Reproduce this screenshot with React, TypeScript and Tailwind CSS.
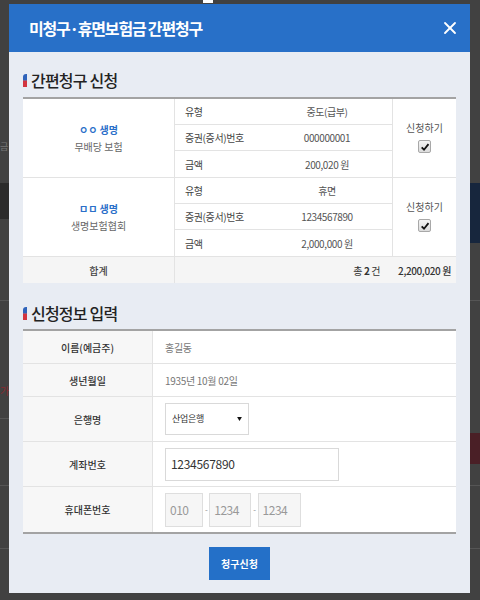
import React from "react";
import { X } from "lucide-react";

const font = { fontFamily: '"Noto Sans CJK KR", "Noto Sans", sans-serif' };

interface Policy {
  company: string;
  product: string;
  type: string;
  number: string;
  amount: string;
}

const policies: Policy[] = [
  { company: "ㅇㅇ 생명", product: "무배당 보험", type: "중도(급부)", number: "000000001", amount: "200,020 원" },
  { company: "ㅁㅁ 생명", product: "생명보험협회", type: "휴면", number: "1234567890", amount: "2,000,000 원" },
];

const SectionTitle = ({ children }: { children: React.ReactNode }) => (
  <div className="flex items-center h-[24px] gap-[4px]">
    <span className="w-[4px] h-[13px] rounded-tl-[3px] bg-linear-to-b from-[#2f63ba] from-45% to-[#d3343f] to-55%" />
    <h2 className="text-[16px] leading-none font-medium text-[#222] tracking-[-0.8px]">{children}</h2>
  </div>
);

const CheckBox = () => (
  <span className="w-[13px] h-[13px] border border-[#a8a8a8] rounded-[2px] bg-linear-to-b from-[#f4f4f4] to-[#dcdcdc] flex items-center justify-center">
    <svg viewBox="0 0 12 12" className="w-[10px] h-[10px]">
      <path d="M2 6.5 L4.8 9.3 L10.2 2.6" fill="none" stroke="#111" strokeWidth="2.2" />
    </svg>
  </span>
);

const PolicyGroup = ({ p }: { p: Policy }) => {
  const rows = [
    ["유형", p.type],
    ["증권(증서)번호", p.number],
    ["금액", p.amount],
  ];
  return (
    <div className="flex border-b border-[#e3e3e3] bg-white">
      <div className="w-[152px] flex flex-col items-center justify-center gap-[7px] border-r border-[#e3e3e3]">
        <span className="text-[10px] font-bold text-[#2a6fc9] leading-none">{p.company}</span>
        <span className="text-[10px] text-[#666] leading-none">{p.product}</span>
      </div>
      <div className="w-[217px] flex flex-col">
        {rows.map(([label, value], i) => (
          <div
            key={label}
            className={"flex items-center h-[26px] text-[10px] text-[#555] tracking-[-0.4px] " + (i < 2 ? "border-b border-[#e3e3e3]" : "")}
          >
            <span className="w-[87px] pl-[10px] text-[#444]">{label}</span>
            <span className="flex-1 text-center">{value}</span>
          </div>
        ))}
      </div>
      <div className="flex-1 flex flex-col items-center justify-center gap-[7px] border-l border-[#e3e3e3]">
        <span className="text-[10px] text-[#555] leading-none">신청하기</span>
        <CheckBox />
      </div>
    </div>
  );
};

const InfoRow = ({ label, tall, last, children }: { label: string; tall?: boolean; last?: boolean; children: React.ReactNode }) => (
  <div className={"flex " + (tall ? "h-[45px] " : "h-[33px] ") + (last ? "" : "border-b border-[#e3e3e3]")}>
    <div className="w-[130px] bg-[#f7f7f7] border-r border-[#e3e3e3] flex items-center justify-center text-[10px] font-medium text-[#333]">
      {label}
    </div>
    <div className="flex-1 bg-white flex items-center pl-[12px] text-[10px] text-[#777] tracking-[-0.3px]">{children}</div>
  </div>
);

const Background = () => (
  <div className="absolute inset-0 bg-[#414141]">
    <div className="absolute left-0 top-[183px] w-[10px] h-[36px] bg-[#2b2b2b]" />
    <div className="absolute left-0 top-[300px] w-[10px] h-px bg-[#555]" />
    <div className="absolute left-0 top-[418px] w-[10px] h-px bg-[#555]" />
    <div className="absolute left-0 top-[485px] w-[10px] h-px bg-[#555]" />
    <div className="absolute left-0 top-[548px] w-[10px] h-px bg-[#555]" />
    <span className="absolute left-0 top-[386px] text-[10px] text-[#8a2a30] leading-none">가</span>
    <span className="absolute left-0 top-[142px] text-[9px] text-[#777] leading-none">금</span>
    <div className="absolute right-0 top-[183px] w-[10px] h-[60px] bg-[#17263d]" />
    <div className="absolute right-0 top-[300px] w-[10px] h-px bg-[#555]" />
    <div className="absolute right-0 top-[433px] w-[10px] h-[31px] bg-[#4a1f26]" />
    <div className="absolute right-0 top-[485px] w-[10px] h-px bg-[#555]" />
    <div className="absolute right-0 top-[548px] w-[10px] h-px bg-[#555]" />
    <div className="absolute left-[203px] top-0 w-[10px] h-[3px] bg-white" />
  </div>
);

export default function App() {
  return (
    <div className="relative w-[480px] h-[600px] overflow-hidden" style={font}>
      <Background />
      <div className="relative ml-[9px] mt-[4px] w-[461px] bg-[#e8ecf3]">
        <header className="h-[48px] bg-[#2870c8] flex items-center justify-between pl-[20px] pr-[10px]">
          <h1 className="text-[16px] font-bold text-white tracking-[-1.2px]">미청구·휴면보험금 간편청구</h1>
          <X size={20} color="#fff" strokeWidth={2.2} />
        </header>

        <div className="px-[14px] pt-[16px] pb-[13px]">
          <SectionTitle>간편청구 신청</SectionTitle>
          <div className="mt-[5px] border-t-2 border-[#a3a3a3]">
            {policies.map((p) => (
              <PolicyGroup key={p.number} p={p} />
            ))}
            <div className="flex h-[26px] bg-[#f5f5f5] text-[10px]">
              <div className="w-[152px] flex items-center justify-center border-r border-[#e3e3e3] text-[#444] font-medium">
                합계
              </div>
              <div className="flex-1 flex items-center justify-end pr-[5px] gap-[18px] text-[#333] tracking-[-0.4px]">
                <span>
                  총 <b>2</b> 건
                </span>
                <span className="font-medium">2,200,020 원</span>
              </div>
            </div>
          </div>

          <div className="mt-[18px]">
            <SectionTitle>신청정보 입력</SectionTitle>
          </div>
          <div className="mt-[4px] border-t-2 border-b-2 border-[#a3a3a3]">
            <InfoRow label="이름(예금주)">홍길동</InfoRow>
            <InfoRow label="생년월일">1935년 10월 02일</InfoRow>
            <InfoRow label="은행명" tall>
              <div className="w-[84px] h-[32px] border border-[#d9d9d9] bg-white flex items-center justify-between px-[6px] text-[9px] text-[#333]">
                <span>산업은행</span>
                <svg viewBox="0 0 6 5" className="w-[5px] h-[4px]">
                  <path d="M0 0 H6 L3 5 Z" fill="#111" />
                </svg>
              </div>
            </InfoRow>
            <InfoRow label="계좌번호" tall>
              <div className="w-[174px] h-[33px] border border-[#d9d9d9] bg-white flex items-center px-[5px] text-[12px] text-[#333]">
                1234567890
              </div>
            </InfoRow>
            <InfoRow label="휴대폰번호" tall last>
              <div className="flex items-center gap-[2px] text-[12px] text-[#999] tracking-[-0.5px]">
                <span className="w-[38px] h-[34px] border border-[#dedede] bg-[#f6f6f6] flex items-center px-[4px]">010</span>
                <span className="text-[#888] text-[8px]">-</span>
                <span className="w-[42px] h-[34px] border border-[#dedede] bg-[#f6f6f6] flex items-center px-[4px]">1234</span>
                <span className="text-[#888] text-[8px]">-</span>
                <span className="w-[43px] h-[34px] border border-[#dedede] bg-[#f6f6f6] flex items-center px-[4px]">1234</span>
              </div>
            </InfoRow>
          </div>

          <div className="flex justify-center mt-[13px]">
            <button className="w-[61px] h-[33px] bg-[#2470c8] text-white text-[10px] font-bold">청구신청</button>
          </div>
        </div>
      </div>
    </div>
  );
}
